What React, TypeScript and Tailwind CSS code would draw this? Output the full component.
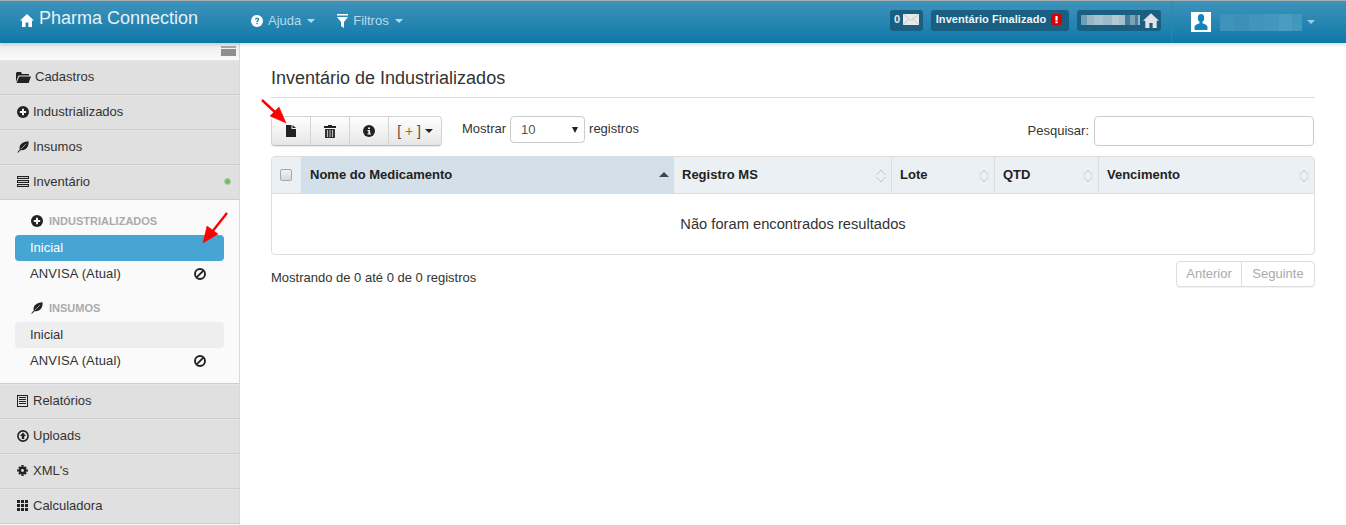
import React from 'react';

const Caret = ({ className = '' }: { className?: string }) => (
  <span className={`inline-block w-0 h-0 border-x-[4px] border-x-transparent border-t-[4px] ${className}`} />
);

const HomeIcon = ({ size = 14, fill = 'currentColor', className = '' }: { size?: number; fill?: string; className?: string }) => (
  <svg width={size} height={size} viewBox="0 0 14 14" fill={fill} className={className}>
    <path d="M7 1 0 7.6h2V14h3.6V9.6h2.8V14H12V7.6h2z" />
  </svg>
);

const HelpIcon = () => (
  <svg width="12" height="12" viewBox="0 0 12 12">
    <circle cx="6" cy="6" r="6" fill="#fff" />
    <path d="M3.9 4.6C4 3.3 5 2.6 6.1 2.6c1.2 0 2.1.7 2.1 1.8 0 1.5-1.5 1.4-1.5 2.6H5.3c0-1.8 1.4-1.8 1.4-2.6 0-.4-.3-.6-.7-.6-.4 0-.7.3-.8.8z" fill="#2a85ae" />
    <rect x="5.3" y="7.8" width="1.4" height="1.4" fill="#2a85ae" />
  </svg>
);

const FilterIcon = () => (
  <svg width="11" height="14" viewBox="0 0 11 14" fill="#fff">
    <rect x="0" y="0" width="11" height="1.5" />
    <path d="M0 3h11L7 8v6L4 12V8z" />
  </svg>
);

const FolderIcon = () => (
  <svg width="15" height="12" viewBox="0 0 15 12" fill="#222">
    <path d="M0 2V11L2.4 4.6H13V3H6L5 1H1z" />
    <path d="M3.2 5.6H15L12.6 12H.6z" />
  </svg>
);

const PlusCircleIcon = () => (
  <svg width="12" height="12" viewBox="0 0 12 12">
    <circle cx="6" cy="6" r="6" fill="#222" />
    <path d="M5 2.8h2V5h2.2v2H7v2.2H5V7H2.8V5H5z" fill="#f2f2f2" />
  </svg>
);

const LeafIcon = () => (
  <svg width="12" height="12" viewBox="0 0 13 13" fill="#222">
    <path d="M12.6.4C12.8 7 9.6 10.8 3.8 10L1 12.8l-.7-.6L3 9.3C1.8 4.2 6 .6 12.6.4z" />
    <path d="M9.6 3.4 4 9" stroke="#e0e0e0" strokeWidth=".7" />
  </svg>
);

const HdIcon = () => (
  <svg width="12" height="11" viewBox="0 0 12 11" fill="#222">
    <rect width="12" height="3" />
    <rect y="4" width="12" height="3" />
    <rect y="8" width="12" height="3" />
    <rect x="1" y="1" width="10" height="1" fill="#c8c8c8" />
    <rect x="1" y="5" width="10" height="1" fill="#c8c8c8" />
    <rect x="1" y="9" width="10" height="1" fill="#c8c8c8" />
  </svg>
);

const ListIcon = () => (
  <svg width="11" height="12" viewBox="0 0 11 12" fill="none" stroke="#222">
    <rect x=".5" y=".5" width="10" height="11" />
    <path d="M2 2.500h7M2 4.500h7M2 6.500h7M2 8.500h7" />
  </svg>
);

const UploadIcon = () => (
  <svg width="12" height="12" viewBox="0 0 12 12">
    <circle cx="6" cy="6" r="5.1" fill="none" stroke="#222" strokeWidth="1.6" />
    <path d="M6 2.6 9 6H7.2v3H4.8V6H3z" fill="#222" />
  </svg>
);

const CogIcon = () => (
  <svg width="11" height="11" viewBox="0 0 12 12">
    <circle cx="6" cy="6" r="3" fill="none" stroke="#222" strokeWidth="2.8" />
    <path d="M4.8 0h2.4v2H4.8zM4.8 10h2.4v2H4.8zM0 4.8h2v2.4H0zM10 4.8h2v2.4h-2zM1.3 3 3 1.3l1.2 1.2-1.7 1.7zM9 1.3 10.7 3 9.5 4.2 7.8 2.5zM3 10.7 1.3 9l1.2-1.2 1.7 1.7zM10.7 9 9 10.7 7.8 9.5l1.7-1.7z" fill="#222" />
  </svg>
);

const GridIcon = () => (
  <svg width="11" height="11" viewBox="0 0 11 11" fill="#222">
    {[0, 4, 8].flatMap(y => [0, 4, 8].map(x => <rect key={`${x}-${y}`} x={x} y={y} width="3" height="3" />))}
  </svg>
);

const BanIcon = () => (
  <svg width="12" height="12" viewBox="0 0 12 12" fill="none" stroke="#222" strokeWidth="1.9">
    <circle cx="6" cy="6" r="5" />
    <path d="M2.6 9.4 9.4 2.6" />
  </svg>
);

const FileIcon = () => (
  <svg width="10" height="12" viewBox="0 0 10 12" fill="#222">
    <path d="M0 0h5.5v4H10v8H0z" />
    <path d="M6.5 0 10 3H6.5z" />
  </svg>
);

const TrashIcon = () => (
  <svg width="12" height="13" viewBox="0 0 12 13">
    <path d="M4 1V0h4v1h4v2H0V1z" fill="#222" />
    <path d="M1 4h10v9H1z" fill="#333" />
    <path d="M3.5 5v7M6 5v7M8.5 5v7" stroke="#bbb" strokeWidth="1" />
  </svg>
);

const InfoIcon = () => (
  <svg width="12" height="12" viewBox="0 0 12 12">
    <circle cx="6" cy="6" r="6" fill="#222" />
    <path d="M5 2.4h2v1.7H5zM4.4 5h2.7v3.4H8v1H4.4v-1h.9V6h-.9z" fill="#f0f0f0" />
  </svg>
);

const EnvelopeIcon = () => (
  <svg width="16" height="11" viewBox="0 0 16 11" className="ml-[1px]">
    <rect width="16" height="11" fill="#e8e8e8" />
    <path d="M.5.5 8 6.5 15.500.5M.5 10.500 6 5M15.500 10.500 10 5" fill="none" stroke="#c2c2c2" strokeWidth=".8" />
  </svg>
);

const AlertIcon = () => (
  <svg width="11" height="11" viewBox="0 0 11 11">
    <rect width="11" height="11" rx="3" fill="#d90000" />
    <rect x="4.4" y="2" width="2.2" height="4.6" fill="#fff" />
    <rect x="4.4" y="7.4" width="2.2" height="1.8" fill="#fff" />
  </svg>
);

const UserIcon = () => (
  <svg width="14" height="16" viewBox="0 0 14 16" fill="#1184bd">
    <ellipse cx="7" cy="4" rx="3.2" ry="4" />
    <path d="M5.400 7.500h3.200v2C11 10 13.500 11 13.500 13v2.200c0 .5-.3.8-.8.8H1.300c-.5 0-.8-.3-.8-.8V13c0-2 2.500-3 4.900-3.500z" />
  </svg>
);

const SortArrows = () => (
  <svg width="10" height="14" viewBox="0 0 10 14" fill="none" stroke="#c4c9cc" strokeWidth="1" className="absolute right-[5px] top-[12px]">
    <path d="M.5 6 5 1l4.500 5" />
    <path d="M.5 8 5 13l4.500-5" />
  </svg>
);

const Pixelated = ({ cells, height }: { cells: [number, string][]; height: string }) => (
  <span className={`flex ${height}`}>
    {cells.map(([w, c], i) => (
      <span key={i} style={{ width: w, backgroundColor: c }} />
    ))}
  </span>
);

const MenuRow = ({ label, icon, wide, children }: { label: string; icon: React.ReactNode; wide?: boolean; children?: React.ReactNode }) => (
  <div className="h-[35px] flex items-center gap-[4px] pl-[16px] pr-[8px] pb-[2px] bg-[#e0e0e0] border-b border-[#cdcdcd] border-t border-t-[#e6e6e6] text-[13px] text-[#333]">
    <span className={`${wide ? 'w-[15px]' : 'w-[13px]'} flex justify-center shrink-0`}>{icon}</span>
    <span className="flex-1">{label}</span>
    {children}
  </div>
);

const SubMenu = ({ title, icon, active }: { title: string; icon: React.ReactNode; active?: boolean }) => (
  <div>
    <div className="h-[26px] flex items-center gap-[6px] pl-[31px] text-[11px] font-bold text-[#aaaaaa]">
      {icon}
      {title}
    </div>
    <div className={`mx-[15px] mt-[1px] h-[26px] rounded-[4px] pl-[15px] flex items-center text-[13px] ${active ? 'bg-[#46a5d3] text-white' : 'bg-[#eeeeee] text-[#333]'}`}>
      Inicial
    </div>
    <div className="h-[26px] flex items-center pl-[30px] pr-[33px] justify-between text-[13px] tracking-[0.15px] text-[#333]">
      ANVISA (Atual)
      <BanIcon />
    </div>
  </div>
);

const columns = [
  { label: 'Nome do Medicamento', w: 'w-[373px] pl-[9px]', bg: 'bg-[#d3e0e9]', sorted: true },
  { label: 'Registro MS', w: 'w-[218px] pl-[8px]', bg: 'bg-[#eaf0f4]' },
  { label: 'Lote', w: 'w-[103px] pl-[8px]', bg: 'bg-[#eaf0f4]' },
  { label: 'QTD', w: 'w-[104px] pl-[8px]', bg: 'bg-[#eaf0f4]' },
  { label: 'Vencimento', w: 'flex-1 pl-[8px]', bg: 'bg-[#eaf0f4]' },
];

export default function App() {
  return (
    <div className="h-[525px] w-[1346px] overflow-hidden bg-white text-[#333] font-['Liberation_Sans',Arial,sans-serif] relative">
      {/* top navbar */}
      <header className="h-[43px] border-t border-[#a8adb0] bg-gradient-to-b from-[#3c93bb] to-[#0779a8] text-white flex items-center relative z-10 shadow-[0_1px_4px_rgba(0,0,0,0.2)]">
        <div className="w-[251px] pl-[20px] flex items-center gap-[5px] shrink-0">
          <HomeIcon className="-mt-[4px]" />
          <span className="text-[18px] leading-[20px] text-[#e4f1f7] -mt-[8px]">Pharma Connection</span>
        </div>
        <div className="flex items-center gap-[5px] text-[13px] text-[#b9dcec] -mt-[2px]">
          <HelpIcon />
          <span>Ajuda</span>
          <Caret className="border-t-[#b9dcec] ml-[1px]" />
          <span className="ml-[17px]"><FilterIcon /></span>
          <span>Filtros</span>
          <Caret className="border-t-[#b9dcec] ml-[1px]" />
        </div>
        <div className="ml-auto flex items-center h-full">
          <div className="flex items-center gap-[8px] -mt-[3px]">
            <div className="h-[21px] w-[33px] rounded-[3px] bg-[#185f82] flex items-center justify-center gap-[2px] pb-[2px] text-[11px] font-bold text-[#e8eef1]">
              0<EnvelopeIcon />
            </div>
            <div className="h-[21px] w-[138px] rounded-[3px] bg-[#185f82] flex items-center justify-center gap-[5px] pb-[2px] pr-[2px] text-[11px] font-bold tracking-[0.05px] text-[#f0f4f6]">
              Inventário Finalizado
              <AlertIcon />
            </div>
            <div className="h-[21px] w-[84px] rounded-[3px] bg-[#185f82] flex items-center gap-[3px] pl-[4px] pb-[1px]">
              <Pixelated
                height="h-[10px]"
                cells={[[6, '#6f9fb6'], [7, '#97b6c6'], [9, '#a7c1cf'], [9, '#9dbaca'], [7, '#b3cad6'], [6, '#a4bfcd'], [5, '#3d7c9b'], [5, '#7ba3b8'], [3, '#497f9b'], [2, '#9ab7c6']]}
              />
              <HomeIcon size={16} fill="#dfe3e5" />
            </div>
          </div>
          <div className="h-[40px] border-l border-[#2c86ad] ml-[10px] pl-[19px] flex items-center">
            <span className="w-[20px] h-[20px] bg-white flex items-center justify-center">
              <UserIcon />
            </span>
            <span className="ml-[9px]">
              <Pixelated
                height="h-[17px]"
                cells={[[15, '#3d93ba'], [14, '#3b90b8'], [15, '#3f95bb'], [15, '#4197bd'], [13, '#4a9cc0'], [10, '#4297bc']]}
              />
            </span>
            <Caret className="border-t-[#9fcde2] ml-[5px] mr-[31px]" />
          </div>
        </div>
      </header>

      <div className="flex h-[482px]">
        {/* left sidebar */}
        <aside className="w-[240px] shrink-0 bg-[#fafafa] border-r border-[#d9d9d9]">
          <div className="h-[17px] flex justify-end pr-[3px] pt-[3px] bg-gradient-to-b from-[#ececec] to-[#fafafa]">
            <span className="w-[15px] h-[10px] flex flex-col gap-[1px]">
              <span className="h-[2px] bg-[#a8a8a8]" />
              <span className="h-[7px] bg-[#8f8f8f]" />
            </span>
          </div>
          <MenuRow label="Cadastros" icon={<FolderIcon />} wide />
          <MenuRow label="Industrializados" icon={<PlusCircleIcon />} />
          <MenuRow label="Insumos" icon={<LeafIcon />} />
          <MenuRow label="Inventário" icon={<HdIcon />}>
            <span className="w-[7px] h-[7px] rounded-full bg-[#72bb60] border border-[#b0cfa8]" />
          </MenuRow>
          <div className="h-[184px] pt-[8px] flex flex-col gap-[8px] border-b border-[#cdcdcd]">
            <SubMenu title="INDUSTRIALIZADOS" icon={<PlusCircleIcon />} active />
            <SubMenu title="INSUMOS" icon={<LeafIcon />} />
          </div>
          <MenuRow label="Relatórios" icon={<ListIcon />} />
          <MenuRow label="Uploads" icon={<UploadIcon />} />
          <MenuRow label="XML's" icon={<CogIcon />} />
          <MenuRow label="Calculadora" icon={<GridIcon />} />
        </aside>

        {/* main content */}
        <main className="flex-1 pl-[31px] pr-[31px] pt-[22px]">
          <h1 className="text-[18px] leading-[26px] text-[#333] border-b border-[#dddddd] h-[33px]">Inventário de Industrializados</h1>

          <div className="mt-[18px] h-[30px] flex items-start">
            <div className="flex h-[30px] w-[171px] rounded-[4px] border border-[#d4d4d4] border-b-[#bdbdbd] bg-gradient-to-b from-white to-[#e6e6e6] text-[#222] shadow-[0_1px_1px_rgba(0,0,0,0.08)]">
              <span className="w-[39px] flex items-center justify-center border-r border-[#d4d4d4]"><FileIcon /></span>
              <span className="w-[39px] flex items-center justify-center border-r border-[#d4d4d4]"><TrashIcon /></span>
              <span className="w-[39px] flex items-center justify-center border-r border-[#d4d4d4]"><InfoIcon /></span>
              <span className="flex-1 flex items-center justify-center gap-[4px] text-[14px]">
                <span><span className="text-[#5a4a3a]">[</span> <span className="text-[#8a7a2a]">+</span> <span className="text-[#5a4a3a]">]</span></span>
                <Caret className="border-t-[#222]" />
              </span>
            </div>
            <span className="ml-[20px] text-[13px] leading-[26px]">Mostrar</span>
            <div className="ml-[4px] w-[75px] h-[27px] rounded-[4px] border border-[#cccccc] flex items-center justify-between pl-[10px] pr-[6px] text-[13px] text-[#555]">
              10
              <span className="w-0 h-0 border-x-[3px] border-x-transparent border-t-[6px] border-t-[#222]" />
            </div>
            <span className="ml-[4px] text-[13px] leading-[26px]">registros</span>
            <span className="ml-auto text-[13px] leading-[30px]">Pesquisar:</span>
            <input className="ml-[5px] mr-[1px] w-[220px] h-[30px] rounded-[4px] border border-[#cccccc] bg-white" />
          </div>

          {/* results table */}
          <div className="mt-[10px] w-[1044px] h-[99px] rounded-[4px] border border-[#dddddd] overflow-hidden">
            <div className="flex h-[37px] border-b border-[#dddddd]">
              <div className="w-[29px] bg-[#eaf0f4] flex items-center pl-[8px]">
                <span className="w-[12px] h-[12px] rounded-[2px] border border-[#a8a8a8] bg-gradient-to-b from-[#f2f2f2] to-[#d8d8d8]" />
              </div>
              {columns.map((c, i) => (
                <div key={c.label} className={`${c.w} ${c.bg} relative flex items-center text-[13px] font-bold text-[#222] ${i < columns.length - 1 ? 'border-r border-[#dddddd]' : ''}`}>
                  {c.label}
                  {c.sorted
                    ? <span className="absolute right-[4px] top-[15px] w-0 h-0 border-x-[5px] border-x-transparent border-b-[5px] border-b-[#444]" />
                    : <SortArrows />}
                </div>
              ))}
            </div>
            <div className="h-[60px] flex items-center justify-center text-[14.7px] text-[#333]">Não foram encontrados resultados</div>
          </div>

          <div className="mt-[6px] flex items-start justify-between w-[1044px]">
            <span className="text-[13px] leading-[20px] mt-[7px]">Mostrando de 0 até 0 de 0 registros</span>
            <div className="flex h-[26px] rounded-[4px] border border-[#dddddd] text-[13px] text-[#aaaaaa] shadow-[0_1px_1px_rgba(0,0,0,0.06)]">
              <span className="w-[65px] flex items-center justify-center border-r border-[#dddddd]">Anterior</span>
              <span className="w-[72px] flex items-center justify-center">Seguinte</span>
            </div>
          </div>
        </main>
      </div>

      {/* annotation arrows */}
      <svg width="1346" height="525" className="absolute inset-0 z-20 pointer-events-none">
        <g fill="#f00" stroke="#f00">
          <line x1="262" y1="100" x2="278" y2="115" strokeWidth="2.4" />
          <path d="M286 123 L270 116 L279 107 Z" strokeWidth="0.5" />
          <line x1="227" y1="213" x2="212" y2="232" strokeWidth="2.4" />
          <path d="M203 243 L207 226 L218 234 Z" strokeWidth="0.5" />
        </g>
      </svg>
    </div>
  );
}
